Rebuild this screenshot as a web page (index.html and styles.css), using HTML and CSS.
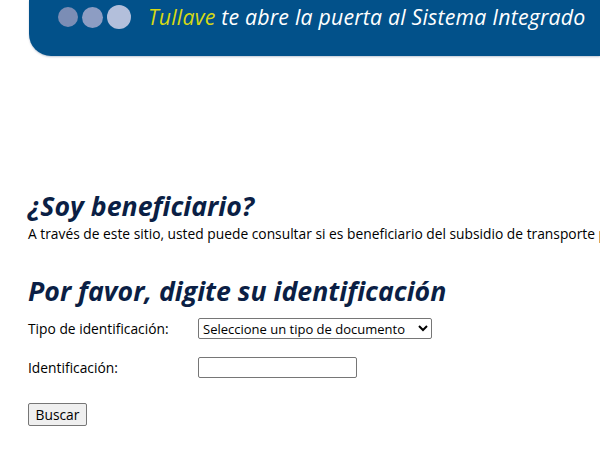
FILE: index.html
```html
<!DOCTYPE html>
<html lang="es">
<head>
<meta charset="utf-8">
<title>Tullave - Beneficiario</title>
<link rel="stylesheet" href="styles.css">
</head>
<body>
<header class="banner">
  <div class="dots">
    <span class="dot dot1"></span>
    <span class="dot dot2"></span>
    <span class="dot dot3"></span>
  </div>
  <p class="slogan"><span class="brand">Tullave</span> te abre la puerta al Sistema Integrado</p>
</header>
<main class="content">
  <h1 class="title">¿Soy beneficiario?</h1>
  <p class="intro">A través de este sitio, usted puede consultar si es beneficiario del subsidio de transporte para personas en condición de vulnerabilidad.</p>
  <h2 class="title title2">Por favor, digite su identificación</h2>
  <form class="form">
    <div class="row">
      <label class="label" for="tipo">Tipo de identificación:</label>
      <select id="tipo" class="select">
        <option>Seleccione un tipo de documento</option>
      </select>
    </div>
    <div class="row">
      <label class="label" for="ident">Identificación:</label>
      <input id="ident" class="input" type="text">
    </div>
    <div class="row">
      <button type="button" class="btn">Buscar</button>
    </div>
  </form>
</main>
</body>
</html>
```
FILE: styles.css
```css
html, body {
  margin: 0;
  padding: 0;
  background: #ffffff;
  overflow: hidden;
}
body {
  font-family: "Open Sans", "Noto Sans", sans-serif;
  color: #000;
}
.banner {
  margin-left: 29px;
  width: 571px;
  height: 56px;
  background: #02518a;
  border-bottom-left-radius: 22px;
  box-shadow: 0 1px 2px rgba(0, 40, 90, 0.25);
  display: flex;
  align-items: flex-start;
  box-sizing: border-box;
  padding-top: 5px;
  padding-left: 29px;
  white-space: nowrap;
  overflow: hidden;
}
.dots {
  display: flex;
  align-items: center;
  gap: 4px;
  height: 24px;
}
.dot {
  display: block;
  border-radius: 50%;
}
.dot1 { width: 20px; height: 20px; background: #7b8db5; }
.dot2 { width: 21px; height: 21px; background: #8d9dc3; }
.dot3 { width: 24px; height: 24px; background: #b3bfdb; }
.slogan {
  margin: 0 0 0 17px;
  font-style: italic;
  font-size: 21.3px;
  line-height: 24px;
  color: #ffffff;
  letter-spacing: 0.2px;
}
.brand { color: #d6d814; }
.content {
  padding: 134px 0 0 28px;
  white-space: nowrap;
  overflow: hidden;
}
.title {
  margin: 0;
  font-size: 26.7px;
  line-height: 32px;
  font-style: italic;
  font-weight: 700;
  color: #0b1f45;
}
.intro {
  margin: 3px 0 0;
  font-size: 13.8px;
  line-height: 17px;
}
.title2 {
  margin-top: 33px;
  margin-bottom: 11px;
}
.form {
  display: flex;
  flex-direction: column;
  gap: 18px;
}
.row {
  display: flex;
  align-items: center;
}
.label {
  width: 170px;
  font-size: 13.8px;
}
.select {
  font-family: inherit;
  font-size: 13px;
  height: 21px;
  width: 234px;
  border: 1px solid #767676;
  border-radius: 2px;
  background: #fff;
  padding: 0;
}
.input {
  font-family: inherit;
  font-size: 13.8px;
  height: 21px;
  width: 159px;
  box-sizing: border-box;
  border: 1px solid #767676;
  border-radius: 2px;
}
.btn {
  font-family: inherit;
  font-size: 13.8px;
  height: 23px;
  width: 59px;
  margin-top: 7px;
  background: #efefef;
  border: 1px solid #767676;
  border-radius: 2px;
  padding: 0;
}
```
